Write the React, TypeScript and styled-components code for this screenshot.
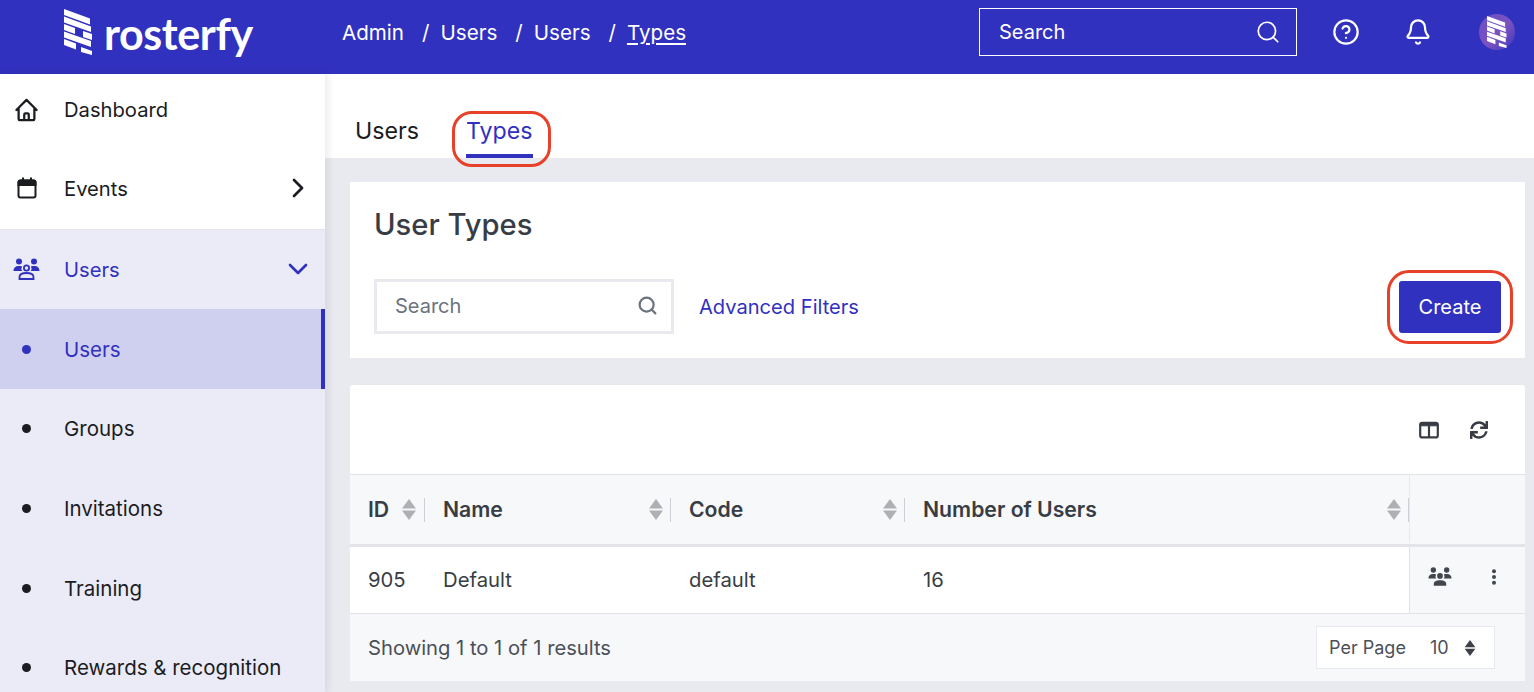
import React from "react";
import styled, { createGlobalStyle } from "styled-components";
import { Bell, ChevronDown, ChevronRight, CircleHelp, Search } from "lucide-react";
import { FaSync } from "react-icons/fa";
import { HiOutlineHome } from "react-icons/hi";

const brand = "#3131bf";
const ink = "#1b1c1f";
const slate = "#383d45";

const GlobalStyle = createGlobalStyle`
  html, body { margin: 0; height: 100%; overflow: hidden; background: #fff; }
  body { font-family: Inter, "Liberation Sans", sans-serif; color: ${ink}; }
  * { box-sizing: border-box; }
`;

const Page = styled.div`
  display: flex;
  flex-direction: column;
  width: 1534px;
  height: 692px;
  overflow: hidden;
`;

const Header = styled.header`
  display: flex;
  align-items: center;
  flex: 0 0 74px;
  background: ${brand};
  color: #fff;
`;

const LogoLink = styled.div`
  display: flex;
  align-items: center;
  gap: 12px;
  width: 342px;
  padding-left: 64px;
  height: 64px;
  margin-bottom: 10px;
`;

const LogoWord = styled.span`
  font-family: Lato, Inter, sans-serif;
  font-size: 43px;
  font-weight: 700;
  letter-spacing: -0.4px;
  line-height: 1;
  margin-top: 2px;
`;

const Crumbs = styled.nav`
  display: flex;
  align-items: center;
  flex: 1;
  font-size: 20.6px;
  margin-bottom: 10px;
`;

const Crumb = styled.span<{ $current?: boolean }>`
  text-decoration: ${(p) => (p.$current ? "underline" : "none")};
  text-underline-offset: 3px;
`;

const CrumbSep = styled.span`
  margin: 0 11px 0 18px;
`;

const TopSearch = styled.div`
  display: flex;
  align-items: center;
  justify-content: space-between;
  width: 318px;
  height: 48px;
  padding: 0 15px 0 19px;
  border: 1px solid #fff;
  font-size: 20px;
  margin-bottom: 10px;
`;

const TopIcons = styled.div`
  display: flex;
  align-items: center;
  width: 237px;
  padding-left: 35px;
  gap: 44px;
  margin-bottom: 10px;
`;

const Avatar = styled.div`
  display: flex;
  align-items: center;
  justify-content: center;
  width: 36px;
  height: 36px;
  margin-left: 3px;
  border-radius: 50%;
  background: linear-gradient(135deg, #6c4fc4, #7a52c0 55%, #3c35bf);
`;

const Body = styled.div`
  display: flex;
  flex: 1;
  min-height: 0;
`;

const Sidebar = styled.aside`
  flex: 0 0 325px;
  display: flex;
  flex-direction: column;
  background: #fff;
  box-shadow: 2px 0 8px rgba(30, 30, 50, 0.1);
  z-index: 1;
`;

const TopRow = styled.div<{ $height: number; $nudge?: number }>`
  display: flex;
  align-items: center;
  flex-shrink: 0;
  height: ${(p) => p.$height}px;
  padding: ${(p) => p.$nudge ?? 0}px 11px 0 13px;
  font-size: 20.2px;
`;

const NavIcon = styled.span`
  display: flex;
  justify-content: center;
  width: 27px;
  margin-right: 24px;
`;

const NavLabel = styled.span`
  flex: 1;
`;

const Group = styled.div`
  flex: 1;
  background: #ebebf8;
  border-top: 1px solid #e3e3ea;
  color: ${ink};
`;

const GroupHead = styled(TopRow)`
  color: ${brand};
  padding-right: 11px;
  padding-bottom: 1px;
`;

const SubRow = styled.div<{ $active?: boolean }>`
  display: flex;
  align-items: center;
  height: 79.6px;
  padding: 1px 0 0 22px;
  font-size: 20.5px;
  color: ${(p) => (p.$active ? brand : ink)};
  background: ${(p) => (p.$active ? "#cfcfef" : "transparent")};
  border-right: 4px solid ${(p) => (p.$active ? brand : "transparent")};
`;

const Dot = styled.span`
  width: 9px;
  height: 9px;
  margin-right: 33px;
  border-radius: 50%;
  background: currentColor;
`;

const Main = styled.main`
  flex: 1;
  display: flex;
  flex-direction: column;
  background: #e9eaef;
  min-width: 0;
`;

const TabBar = styled.div`
  display: flex;
  flex: 0 0 84px;
  gap: 47px;
  align-items: flex-end;
  padding-left: 30px;
  background: #fff;
`;

const Tab = styled.div<{ $active?: boolean }>`
  position: relative;
  height: 44px;
  padding-top: 2px;
  font-size: 23.2px;
  line-height: 30px;
  color: ${(p) => (p.$active ? brand : ink)};
  border-bottom: ${(p) => (p.$active ? `4px solid ${brand}` : "none")};
`;

const Callout = styled.span`
  position: absolute;
  border: 3px solid #e8412a;
  border-radius: 20px;
  pointer-events: none;
`;

const TabCallout = styled(Callout)`
  left: -14px;
  right: -18px;
  top: -3px;
  bottom: -13px;
`;

const Cards = styled.div`
  display: flex;
  flex-direction: column;
  gap: 27px;
  padding: 24px 9px 0 25px;
`;

const FilterCard = styled.section`
  height: 176px;
  padding: 25px 24px 0 24px;
  background: #fff;
`;

const Title = styled.h1`
  margin: 0;
  font-size: 29.2px;
  line-height: 36px;
  font-weight: 450;
  color: ${slate};
`;

const FilterRow = styled.div`
  display: flex;
  align-items: center;
  margin-top: 36px;
`;

const FilterSearch = styled.div`
  display: flex;
  align-items: center;
  justify-content: space-between;
  width: 300px;
  height: 55px;
  padding: 0 13px 2px 18px;
  border: 3px solid #e9eaef;
  font-size: 20px;
  color: #6b7280;
`;

const FilterLink = styled.a`
  margin-left: 25px;
  flex: 1;
  font-size: 20.1px;
  color: ${brand};
`;

const CreateButton = styled.button`
  position: relative;
  width: 102px;
  height: 52px;
  border: 0;
  border-radius: 3px;
  background: ${brand};
  color: #fff;
  font: 400 20px Inter, sans-serif;
`;

const ButtonCallout = styled(Callout)`
  left: -12px;
  right: -12px;
  top: -11px;
  bottom: -11px;
  border-radius: 22px;
`;

const TableCard = styled.section`
  height: 296px;
  border-radius: 3px 3px 0 0;
  overflow: hidden;
  background: #fff;
`;

const Toolbar = styled.div`
  display: flex;
  align-items: center;
  justify-content: flex-end;
  gap: 31px;
  height: 90px;
  padding-right: 37px;
  padding-top: 1px;
  border-bottom: 1px solid #e2e3e8;
  color: ${slate};
`;

const GridRow = styled.div`
  display: grid;
  grid-template-columns: 75px 246px 234px 504px 116px;
`;

const HeadRow = styled(GridRow)`
  height: 72px;
  padding-bottom: 1px;
  background: #f7f8fa;
  border-bottom: 3px solid #e3e4e9;
`;

const HeadCell = styled.div`
  position: relative;
  display: flex;
  align-items: center;
  justify-content: space-between;
  padding: 0 8px 0 18px;
  font-size: 21.2px;
  font-weight: 600;
  color: ${slate};
  &:first-child {
    padding-right: 9px;
  }
  &:nth-child(-n + 4)::after {
    content: "";
    position: absolute;
    right: 0;
    top: 23px;
    width: 1px;
    height: 24px;
    background: #cdd0d6;
  }
`;

const ActionHead = styled.div`
  border-left: 1px solid #e8e9ed;
`;

const DataRow = styled(GridRow)`
  height: 67px;
  border-bottom: 1px solid #e2e3e8;
  font-size: 20.3px;
  color: ${slate};
`;

const DataCell = styled.div`
  display: flex;
  align-items: center;
  padding: 0 0 2px 18px;
`;

const ActionCell = styled.div`
  display: flex;
  align-items: center;
  justify-content: center;
  gap: 39px;
  padding: 0 11px 6px 0;
  background: #f7f8fa;
  border-left: 1px solid #e2e3e8;
  color: #41464e;
`;

const Footer = styled.div`
  display: flex;
  align-items: center;
  justify-content: space-between;
  height: 67px;
  padding: 0 30px 0 18px;
  background: #f7f8fa;
  font-size: 20.2px;
  color: #4b5058;
`;

const PerPage = styled.div`
  display: flex;
  align-items: center;
  width: 179px;
  height: 43px;
  padding-left: 12px;
  background: #fff;
  border: 1px solid #e9eaef;
  font-size: 18px;
`;

const PerValue = styled.span`
  margin: 0 15px 0 24px;
`;

function LogoMark({ size }: { size: number }) {
  return (
    <svg width={(size * 28) / 46} height={size} viewBox="0 0 28 46" fill="#fff">
      <path d="M0 0 26 9.5V15.5L0 6Z" />
      <path d="M0 7.5 27 17.5V23L0 13.5Z" />
      <path d="M0 15 11 19V25L0 21Z" />
      <path d="M19 22 28 25V31L19 28Z" />
      <path d="M0 22.5 27 32V38L0 28.5Z" />
      <path d="M0 30 12 34.5V40.5L0 36Z" />
      <path d="M17 38 28 42V46L17 43Z" />
    </svg>
  );
}

function CalendarIcon() {
  return (
    <svg width="20" height="22" viewBox="0 0 20 22" fill="none" stroke={ink} strokeWidth="2">
      <rect x="1.5" y="3.5" width="17" height="17" rx="2" />
      <path d="M1.5 5.5a2 2 0 0 1 2-2h13a2 2 0 0 1 2 2V8h-17Z" fill={ink} />
      <path d="M6 0.5V4M14 0.5V4" />
    </svg>
  );
}

function PeopleIcon({ width, outlined }: { width: number; outlined?: boolean }) {
  return (
    <svg width={width} height={(width * 22) / 27} viewBox="0 0 27 22" fill="currentColor">
      <circle cx="6" cy="3.4" r="3" />
      <circle cx="21" cy="3.4" r="3" />
      <path d="M0.5 13c0-3 2-5 5-5h2c1 0 1.5.4 1.5.9-1 1.4-.6 3 .4 4.1Z" />
      <path d="M26.5 13c0-3-2-5-5-5h-2c-1 0-1.5.4-1.5.9 1 1.4.6 3-.4 4.1Z" />
      <circle
        cx="13.5"
        cy="10"
        r={outlined ? 2.6 : 3.2}
        fill={outlined ? "none" : "currentColor"}
        stroke="currentColor"
        strokeWidth={outlined ? 1.8 : 0}
      />
      <path
        d="M6.5 21v-2c0-2.5 2.8-4 7-4s7 1.5 7 4v2Z"
        fill={outlined ? "none" : "currentColor"}
        stroke="currentColor"
        strokeWidth={outlined ? 1.8 : 0}
      />
    </svg>
  );
}

function ColumnsIcon() {
  return (
    <svg width="20" height="18" viewBox="0 0 20 18" fill="none" stroke="currentColor" strokeWidth="2.2">
      <rect x="1.2" y="1.8" width="17.6" height="14.6" rx="2" />
      <path d="M1.2 3.8a2 2 0 0 1 2-2h13.6a2 2 0 0 1 2 2v1H1.2Z" fill="currentColor" strokeWidth="1" />
      <path d="M10 4V16" />
    </svg>
  );
}

function SortArrows({ tone, small }: { tone: string; small?: boolean }) {
  return (
    <svg width={small ? 12 : 14} height={small ? 16 : 21} viewBox="0 0 14 21" fill={tone}>
      <path d="M7 0 14 9.5H0Z" />
      <path d="M0 11.5H14L7 21Z" />
    </svg>
  );
}

function MoreDots() {
  return (
    <svg width="6" height="16" viewBox="0 0 6 16" fill="currentColor">
      <circle cx="3" cy="2.2" r="2" />
      <circle cx="3" cy="8" r="2" />
      <circle cx="3" cy="13.8" r="2" />
    </svg>
  );
}

const subItems = ["Users", "Groups", "Invitations", "Training", "Rewards & recognition"];
const columns = [
  { label: "ID", value: "905" },
  { label: "Name", value: "Default" },
  { label: "Code", value: "default" },
  { label: "Number of Users", value: "16" },
];

export default function App() {
  return (
    <>
      <GlobalStyle />
      <Page>
        <Header>
          <LogoLink>
            <LogoMark size={46} />
            <LogoWord>rosterfy</LogoWord>
          </LogoLink>
          <Crumbs>
            <Crumb>Admin</Crumb>
            <CrumbSep>/</CrumbSep>
            <Crumb>Users</Crumb>
            <CrumbSep>/</CrumbSep>
            <Crumb>Users</Crumb>
            <CrumbSep>/</CrumbSep>
            <Crumb $current>Types</Crumb>
          </Crumbs>
          <TopSearch>
            <span>Search</span>
            <Search size={26} strokeWidth={1.6} />
          </TopSearch>
          <TopIcons>
            <CircleHelp size={28} strokeWidth={1.9} />
            <Bell size={28} strokeWidth={1.9} />
            <Avatar>
              <LogoMark size={32} />
            </Avatar>
          </TopIcons>
        </Header>
        <Body>
          <Sidebar>
            <TopRow $height={71}>
              <NavIcon>
                <HiOutlineHome size={28} />
              </NavIcon>
              <NavLabel>Dashboard</NavLabel>
            </TopRow>
            <TopRow $height={84} $nudge={2}>
              <NavIcon>
                <CalendarIcon />
              </NavIcon>
              <NavLabel>Events</NavLabel>
              <ChevronRight size={32} strokeWidth={2} />
            </TopRow>
            <Group>
              <GroupHead $height={79}>
                <NavIcon>
                  <PeopleIcon width={27} outlined />
                </NavIcon>
                <NavLabel>Users</NavLabel>
                <ChevronDown size={32} strokeWidth={2} />
              </GroupHead>
              {subItems.map((item, i) => (
                <SubRow key={item} $active={i === 0}>
                  <Dot />
                  {item}
                </SubRow>
              ))}
            </Group>
          </Sidebar>
          <Main>
            <TabBar>
              <Tab>Users</Tab>
              <Tab $active>
                Types
                <TabCallout />
              </Tab>
            </TabBar>
            <Cards>
              <FilterCard>
                <Title>User Types</Title>
                <FilterRow>
                  <FilterSearch>
                    <span>Search</span>
                    <Search size={21} strokeWidth={2.5} />
                  </FilterSearch>
                  <FilterLink>Advanced Filters</FilterLink>
                  <CreateButton>
                    Create
                    <ButtonCallout />
                  </CreateButton>
                </FilterRow>
              </FilterCard>
              <TableCard>
                <Toolbar>
                  <ColumnsIcon />
                  <FaSync size={18} />
                </Toolbar>
                <HeadRow>
                  {columns.map((c) => (
                    <HeadCell key={c.label}>
                      {c.label}
                      <SortArrows tone="#aeb0b4" />
                    </HeadCell>
                  ))}
                  <ActionHead />
                </HeadRow>
                <DataRow>
                  {columns.map((c) => (
                    <DataCell key={c.label}>{c.value}</DataCell>
                  ))}
                  <ActionCell>
                    <PeopleIcon width={24} />
                    <MoreDots />
                  </ActionCell>
                </DataRow>
                <Footer>
                  <span>Showing 1 to 1 of 1 results</span>
                  <PerPage>
                    Per Page
                    <PerValue>10</PerValue>
                    <SortArrows tone="#3c4149" small />
                  </PerPage>
                </Footer>
              </TableCard>
            </Cards>
          </Main>
        </Body>
      </Page>
    </>
  );
}
